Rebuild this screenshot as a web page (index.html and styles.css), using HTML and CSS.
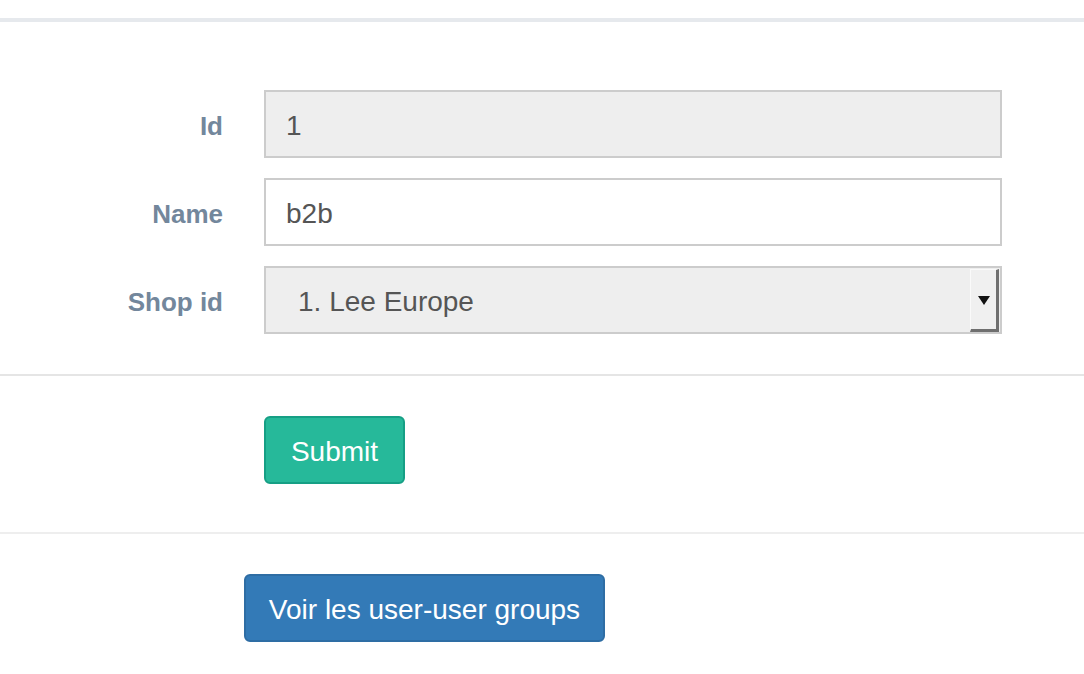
FILE: index.html
```html
<!DOCTYPE html>
<html lang="fr">
<head>
<meta charset="utf-8">
<title>User group</title>
<link rel="stylesheet" href="styles.css">
</head>
<body>
<div class="topline"></div>
<form class="form">
  <div class="row">
    <label class="label">Id</label>
    <div class="control readonly">1</div>
  </div>
  <div class="row">
    <label class="label">Name</label>
    <div class="control">b2b</div>
  </div>
  <div class="row last">
    <label class="label">Shop id</label>
    <div class="control readonly select">
      <span class="select-text">1. Lee Europe</span>
      <span class="select-arrow"><span class="tri"></span></span>
    </div>
  </div>
  <div class="sep"></div>
  <div class="actions">
    <button type="button" class="btn btn-success">Submit</button>
  </div>
  <div class="sep light"></div>
  <div class="links">
    <button type="button" class="btn btn-primary">Voir les user-user groups</button>
  </div>
</form>
</body>
</html>
```
FILE: styles.css
```css
body {
  margin: 0;
  background: #fff;
  font-family: "Liberation Sans", Arial, sans-serif;
}
.topline {
  margin-top: 18px;
  height: 4px;
  background: #e6e9ed;
}
.form {
  padding-top: 68px;
}
.row {
  display: flex;
  align-items: center;
  margin-bottom: 20px;
}
.row.last {
  margin-bottom: 0;
}
.label {
  width: 223px;
  text-align: right;
  font-weight: bold;
  font-size: 26px;
  color: #73879c;
  padding-top: 4px;
}
.control {
  margin-left: 41px;
  width: 738px;
  height: 68px;
  box-sizing: border-box;
  border: 2px solid #ccc;
  background: #fff;
  font-size: 28px;
  color: #555;
  padding: 3px 20px 0;
  display: flex;
  align-items: center;
}
.control.readonly {
  background: #eee;
}
.control.select {
  padding: 0 1px 0 32px;
  align-items: stretch;
}
.select-text {
  flex: 1;
  display: flex;
  align-items: center;
  padding-top: 3px;
}
.select-arrow {
  width: 29px;
  box-sizing: border-box;
  margin-top: 1px;
  background: #f0f0f0;
  border-left: 1px solid #fafafa;
  border-top: 1px solid #fafafa;
  border-right: 3px solid #6f6f6f;
  border-bottom: 3px solid #6f6f6f;
  display: flex;
  align-items: center;
  justify-content: center;
}
.tri {
  width: 0;
  height: 0;
  border-left: 6px solid transparent;
  border-right: 6px solid transparent;
  border-top: 9px solid #111;
  margin-top: 2px;
}
.sep {
  margin-top: 40px;
  height: 2px;
  background: #e5e5e5;
}
.sep.light {
  margin-top: 0;
  background: #eeeeee;
}
.actions {
  padding: 40px 0 48px 264px;
}
.links {
  padding: 40px 0 0 244px;
}
.btn {
  height: 68px;
  box-sizing: border-box;
  border-radius: 6px;
  font-family: "Liberation Sans", Arial, sans-serif;
  font-size: 28px;
  color: #fff;
  padding: 3px 0 0;
  cursor: pointer;
}
.btn-success {
  width: 141px;
  background: #26b99a;
  border: 2px solid #169f85;
}
.btn-primary {
  width: 361px;
  background: #337ab7;
  border: 2px solid #2e6da4;
}
```
